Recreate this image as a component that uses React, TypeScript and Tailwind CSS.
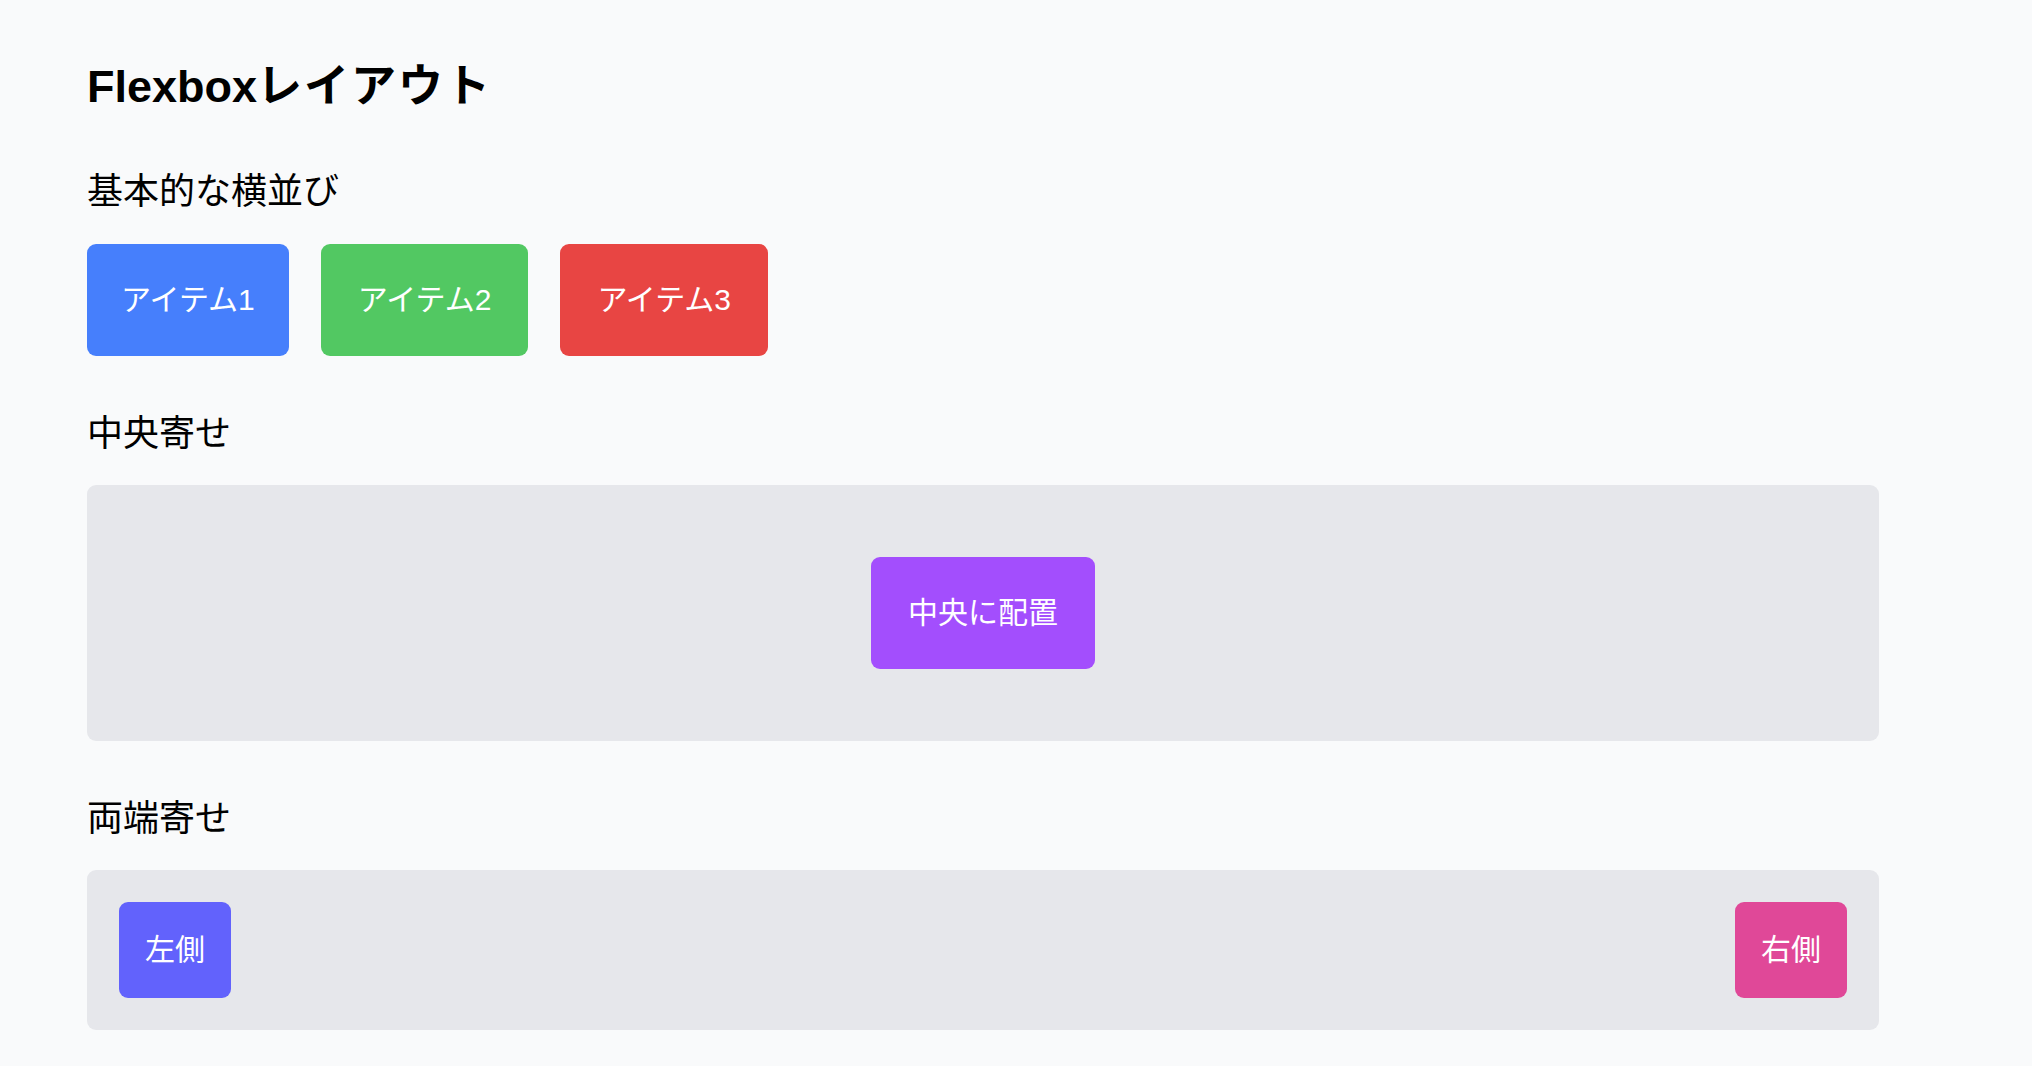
export default function App() {
  return (
    <div className="min-h-screen bg-[#f9fafb] px-[87px] pt-[60px] pb-[40px] text-black font-['Liberation_Sans','Noto_Sans_CJK_JP',sans-serif]">
      <h1 className="text-[45px] leading-[54px] font-bold mb-[54px]">
        Flexbox<span className="tracking-[2px]">レイアウト</span>
      </h1>

      {/* 基本的な横並び */}
      <section className="mb-[54px]">
        <h2 className="text-[36px] leading-[48px] mb-[28px]">基本的な横並び</h2>
        <div className="flex gap-[32px]">
          <div className="bg-[#467ffc] text-white text-[30px] leading-[42px] px-[34px] py-[35px] rounded-[9px]">アイテム1</div>
          <div className="bg-[#52c862] text-white text-[30px] leading-[42px] px-[37px] py-[35px] rounded-[9px]">アイテム2</div>
          <div className="bg-[#e84543] text-white text-[30px] leading-[42px] px-[37px] py-[35px] rounded-[9px]">アイテム3</div>
        </div>
      </section>

      {/* 中央寄せ */}
      <section className="mb-[54px]">
        <h2 className="text-[36px] leading-[48px] mb-[27px]">中央寄せ</h2>
        <div className="w-[1792px] h-[256px] bg-[#e6e7eb] rounded-[9px] flex items-center justify-center">
          <div className="bg-[#a34efd] text-white text-[30px] leading-[42px] px-[37px] py-[35px] rounded-[9px]">中央に配置</div>
        </div>
      </section>

      {/* 両端寄せ */}
      <section>
        <h2 className="text-[36px] leading-[48px] mb-[27px]">両端寄せ</h2>
        <div className="w-[1792px] bg-[#e6e7eb] rounded-[9px] p-[32px] flex justify-between">
          <div className="bg-[#6262fc] text-white text-[30px] leading-[42px] px-[26px] py-[27px] rounded-[9px]">左側</div>
          <div className="bg-[#e04898] text-white text-[30px] leading-[42px] px-[26px] py-[27px] rounded-[9px]">右側</div>
        </div>
      </section>
    </div>
  );
}
